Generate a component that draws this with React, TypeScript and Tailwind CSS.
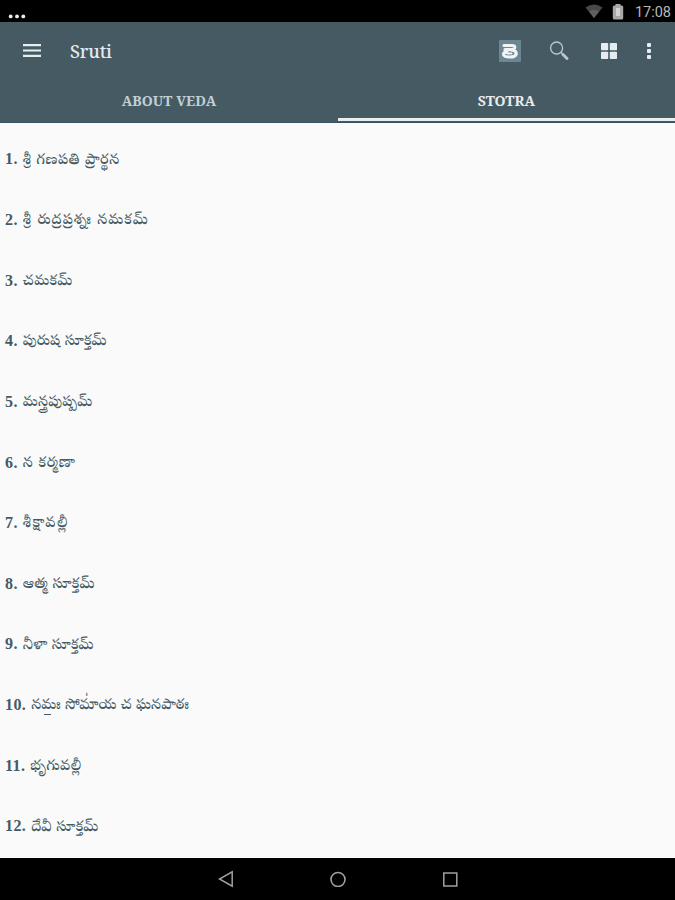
import type { ReactNode } from 'react';

interface Stotra {
  id: number;
  title: ReactNode;
  tracking: string;
}

const stotras: Stotra[] = [
  { id: 1, title: 'శ్రీ గణపతి ప్రార్థన', tracking: 'tracking-[0.55px]' },
  { id: 2, title: 'శ్రీ రుద్రప్రశ్నః నమకమ్', tracking: 'tracking-[1.1px]' },
  { id: 3, title: 'చమకమ్', tracking: 'tracking-[0.5px]' },
  { id: 4, title: 'పురుష సూక్తమ్', tracking: 'tracking-[0.15px]' },
  { id: 5, title: 'మన్త్రపుష్పమ్', tracking: 'tracking-[0.3px]' },
  { id: 6, title: 'న కర్మణా', tracking: 'tracking-[0.8px]' },
  { id: 7, title: 'శీక్షావల్లీ', tracking: 'tracking-[1.5px]' },
  { id: 8, title: 'ఆత్మ సూక్తమ్', tracking: 'tracking-[0.25px]' },
  { id: 9, title: 'నీళా సూక్తమ్', tracking: 'tracking-[0.15px]' },
  {
    id: 10,
    title: (
      <>
        న
        <span className="relative">
          మః
          {/* anudatta stroke under the syllable */}
          <span className="absolute left-[3px] bottom-[1px] w-[7px] h-px bg-current" />
        </span>
        {' సోమా॑య చ ఘనపాఠః'}
      </>
    ),
    tracking: 'tracking-[0.1px]',
  },
  { id: 11, title: 'భృగువల్లీ', tracking: 'tracking-[0.5px]' },
  { id: 12, title: 'దేవీ సూక్తమ్', tracking: 'tracking-[0.2px]' },
];

const StatusBar = () => (
  <div className="h-[22px] bg-black flex justify-between items-center pl-2 pr-1">
    <svg className="w-[18px] h-[22px]" viewBox="0 0 18 22" fill="#eeeeee">
      <circle cx="2.7" cy="16.4" r="1.9" />
      <circle cx="9" cy="16.4" r="1.9" />
      <circle cx="15.3" cy="16.4" r="1.9" />
    </svg>
    <div className="flex items-center">
      <svg className="w-[18px] h-[22px]" viewBox="0 0 18 22">
        <path d="M0.5 7.5 Q9 1.5 17.5 7.5 L9 18 Z" fill="#484848" />
        <path d="M4 11.5 Q9 8 14 11.5 L9 18 Z" fill="#606060" />
      </svg>
      <svg className="w-3 h-[22px] ml-[9px]" viewBox="0 0 12 22">
        <path d="M3.5 4h5v1.6h1.2q1.5 0 1.5 1.5v10.8q0 1.5-1.5 1.5H2.3q-1.5 0-1.5-1.5V7.1q0-1.5 1.5-1.5h1.2z" fill="#a8a8a8" />
        <path d="M4 8h4v8H4z" fill="#d2d2d2" />
      </svg>
      <span className="ml-[11px] mt-[3px] font-[Roboto,sans-serif] text-[14.5px] leading-[22px] text-[#b8b8b8]">
        17:08
      </span>
    </div>
  </div>
);

const Toolbar = () => (
  <div className="h-[57px] flex items-center">
    <svg className="w-[18px] h-[14px] ml-[23px]" viewBox="0 0 18 14" fill="#e6edf0">
      <path d="M0 0h18v2.2H0zM0 5.4h18v2.2H0zM0 10.8h18v2.2H0z" />
    </svg>
    <h1 className="ml-[29px] mt-[2px] font-['Noto_Serif',serif] font-medium text-[18px] tracking-[-0.2px] text-[#e4ebef]">
      Sruti
    </h1>
    <div className="ml-auto flex items-center">
      <svg className="w-[22px] h-[22px] mr-px" viewBox="0 0 22 22">
        <rect width="22" height="22" rx="1" fill="#6c8792" />
        <path
          d="M5 5.500 H13 Q16 5.500 15.700 7.500 Q15.300 9.500 12 9.700 H6 M12 9.900 Q17.500 10.500 17.200 13.800 Q16.500 17 11 17 Q4.500 17 4.500 14.200 Q4.800 11.800 8 12.300"
          fill="none"
          stroke="#f1f4f6"
          strokeWidth="3.2"
          strokeLinecap="round"
          strokeLinejoin="round"
        />
        <path d="M8.500 13.600 H12.500" stroke="#f1f4f6" strokeWidth="2" strokeLinecap="round" />
      </svg>
      <svg className="w-5 h-5 ml-7" viewBox="0 0 20 20" fill="none" stroke="#b9c7cd">
        <circle cx="6.600" cy="7" r="6" strokeWidth="1.300" />
        <path d="M10.900 11.300 L13 13.500" strokeWidth="1.600" />
        <path d="M13 13.500 L17 17.500" strokeWidth="3" strokeLinecap="round" />
      </svg>
      <svg className="w-4 h-4 ml-[31px]" viewBox="0 0 16 16" fill="#e6edf0">
        <rect width="7.200" height="7.200" rx="0.800" />
        <rect x="8.800" width="7.200" height="7.200" rx="0.800" />
        <rect y="8.800" width="7.200" height="7.200" rx="0.800" />
        <rect x="8.800" y="8.800" width="7.200" height="7.200" rx="0.800" />
      </svg>
      <svg className="w-1 h-4 ml-[30px] mr-6" viewBox="0 0 4 16" fill="#e6edf0">
        <rect width="4" height="4" rx="1" />
        <rect y="6" width="4" height="4" rx="1" />
        <rect y="12" width="4" height="4" rx="1" />
      </svg>
    </div>
  </div>
);

const Tabs = () => (
  <div className="h-[44px] flex text-center font-['Noto_Serif',serif] font-bold text-[14px] tracking-[0.05px] leading-[43px] border-b border-[#355260]">
    <div className="w-[338px] text-[#c2d0d6]">ABOUT VEDA</div>
    <div className="flex-1 h-[42px] text-[#e6edf1] border-b-[3px] border-[#e9edf0]">STOTRA</div>
  </div>
);

const NavigationBar = () => (
  <nav className="h-[42px] bg-black flex justify-center items-center gap-[96px]">
    <svg className="w-4 h-[18px]" viewBox="0 0 16 18" fill="none" stroke="#a0a0a0" strokeWidth="1.5">
      <path d="M14.2 1.8V16.2L1.5 9z" />
    </svg>
    <svg className="w-4 h-4" viewBox="0 0 16 16" fill="none" stroke="#a0a0a0" strokeWidth="1.6">
      <circle cx="8" cy="8.5" r="7" />
    </svg>
    <svg className="w-4 h-4" viewBox="0 0 16 16" fill="none" stroke="#a0a0a0" strokeWidth="1.5">
      <rect x="1.8" y="2" width="13" height="13" />
    </svg>
  </nav>
);

export default function App() {
  return (
    <div className="h-[900px] w-[675px] flex flex-col bg-[#fafafa] overflow-hidden">
      <StatusBar />
      <header className="bg-[#465a63]">
        <Toolbar />
        <Tabs />
      </header>
      <ul className="flex-1 min-h-0 overflow-hidden pt-[6px] pl-[5px] font-['Noto_Serif_Telugu','Noto_Sans_Telugu',serif] text-[#455a64]">
        {stotras.map((stotra) => (
          <li key={stotra.id} className="h-[60.65px] flex items-center whitespace-nowrap">
            <span className="font-['Liberation_Serif',serif] font-bold text-[16px] tracking-[0.4px] mr-[5px]">
              {stotra.id}.
            </span>
            <span className={`text-[15px] font-medium pt-[3px] ${stotra.tracking}`}>{stotra.title}</span>
          </li>
        ))}
      </ul>
      <NavigationBar />
    </div>
  );
}
